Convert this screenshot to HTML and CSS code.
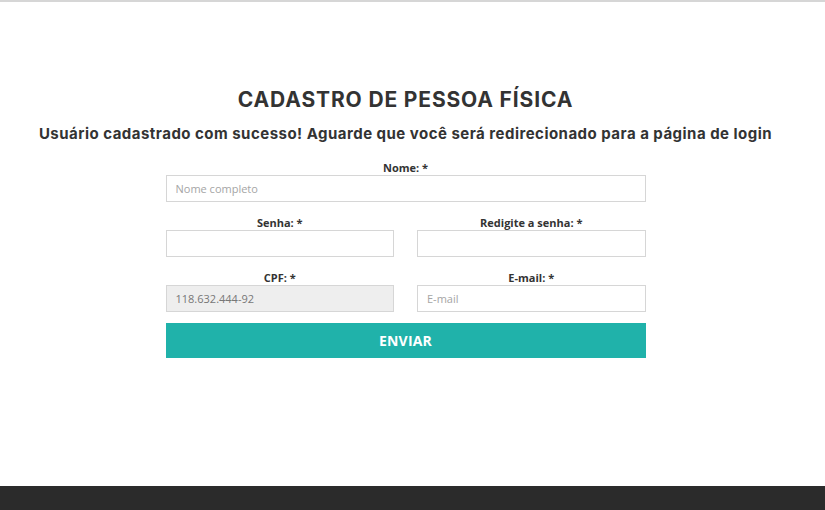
FILE: index.html
```html
<!DOCTYPE html>
<html lang="pt-BR">
<head>
<meta charset="utf-8">
<title>Cadastro de Pessoa Física</title>
<link rel="stylesheet" href="styles.css">
</head>
<body>
<div class="page">
  <div class="topline"></div>
  <main class="content">
    <h1 class="title">CADASTRO DE PESSOA FÍSICA</h1>
    <p class="message">Usuário cadastrado com sucesso! Aguarde que você será redirecionado para a página de login</p>
    <form class="form">
      <div class="field">
        <label class="label">Nome: *</label>
        <input class="input" type="text" placeholder="Nome completo">
      </div>
      <div class="row">
        <div class="field">
          <label class="label">Senha: *</label>
          <input class="input" type="password">
        </div>
        <div class="field">
          <label class="label">Redigite a senha: *</label>
          <input class="input" type="password">
        </div>
      </div>
      <div class="row">
        <div class="field">
          <label class="label">CPF: *</label>
          <input class="input input-disabled" type="text" value="118.632.444-92" readonly>
        </div>
        <div class="field">
          <label class="label">E-mail: *</label>
          <input class="input" type="text" placeholder="E-mail">
        </div>
      </div>
      <button class="submit" type="button">ENVIAR</button>
    </form>
  </main>
  <footer class="footer"></footer>
</div>
</body>
</html>
```

FILE: styles.css
```css
html, body {
  margin: 0;
  padding: 0;
  background: #ffffff;
}

.page {
  display: flex;
  flex-direction: column;
  height: 510px;
  overflow: hidden;
}

.topline {
  height: 2px;
  background: #d6d6d6;
}

.content {
  flex: 1;
  display: flex;
  flex-direction: column;
  align-items: center;
  padding-top: 86px;
  padding-right: 14px;
}

.title {
  margin: 0;
  font-family: Inter, "DejaVu Sans", sans-serif;
  font-weight: 700;
  font-size: 21px;
  line-height: 24px;
  color: #333333;
  letter-spacing: 0.85px;
}

.message {
  margin: 12px 0 0;
  font-family: Inter, "DejaVu Sans", sans-serif;
  font-weight: 700;
  font-size: 15px;
  line-height: 20px;
  color: #333333;
  letter-spacing: 0.48px;
}

.form {
  width: 480px;
  margin-top: 16px;
  display: flex;
  flex-direction: column;
  gap: 13px;
}

.row {
  display: grid;
  grid-template-columns: 1fr 1fr;
  column-gap: 23px;
}

.field {
  display: flex;
  flex-direction: column;
}

.label {
  font-family: "Open Sans", sans-serif;
  font-weight: 700;
  font-size: 11px;
  line-height: 15px;
  color: #333333;
  text-align: center;
}

.input {
  box-sizing: border-box;
  height: 27px;
  margin: 0;
  padding: 0 9px;
  border: 1px solid #d6d6d6;
  border-radius: 0;
  background: #ffffff;
  font-family: "Open Sans", sans-serif;
  font-size: 11px;
  color: #666666;
  outline: none;
}

.input::placeholder {
  color: #a5a5a5;
}

.input-disabled {
  background: #eeeeee;
  color: #777777;
}

.submit {
  margin-top: -2px;
  height: 35px;
  border: 0;
  background: #20b2aa;
  color: #ffffff;
  font-family: "Open Sans", sans-serif;
  font-weight: 700;
  font-size: 14px;
  letter-spacing: 0.2px;
  cursor: pointer;
}

.footer {
  height: 24px;
  background: #2b2b2b;
}
```
